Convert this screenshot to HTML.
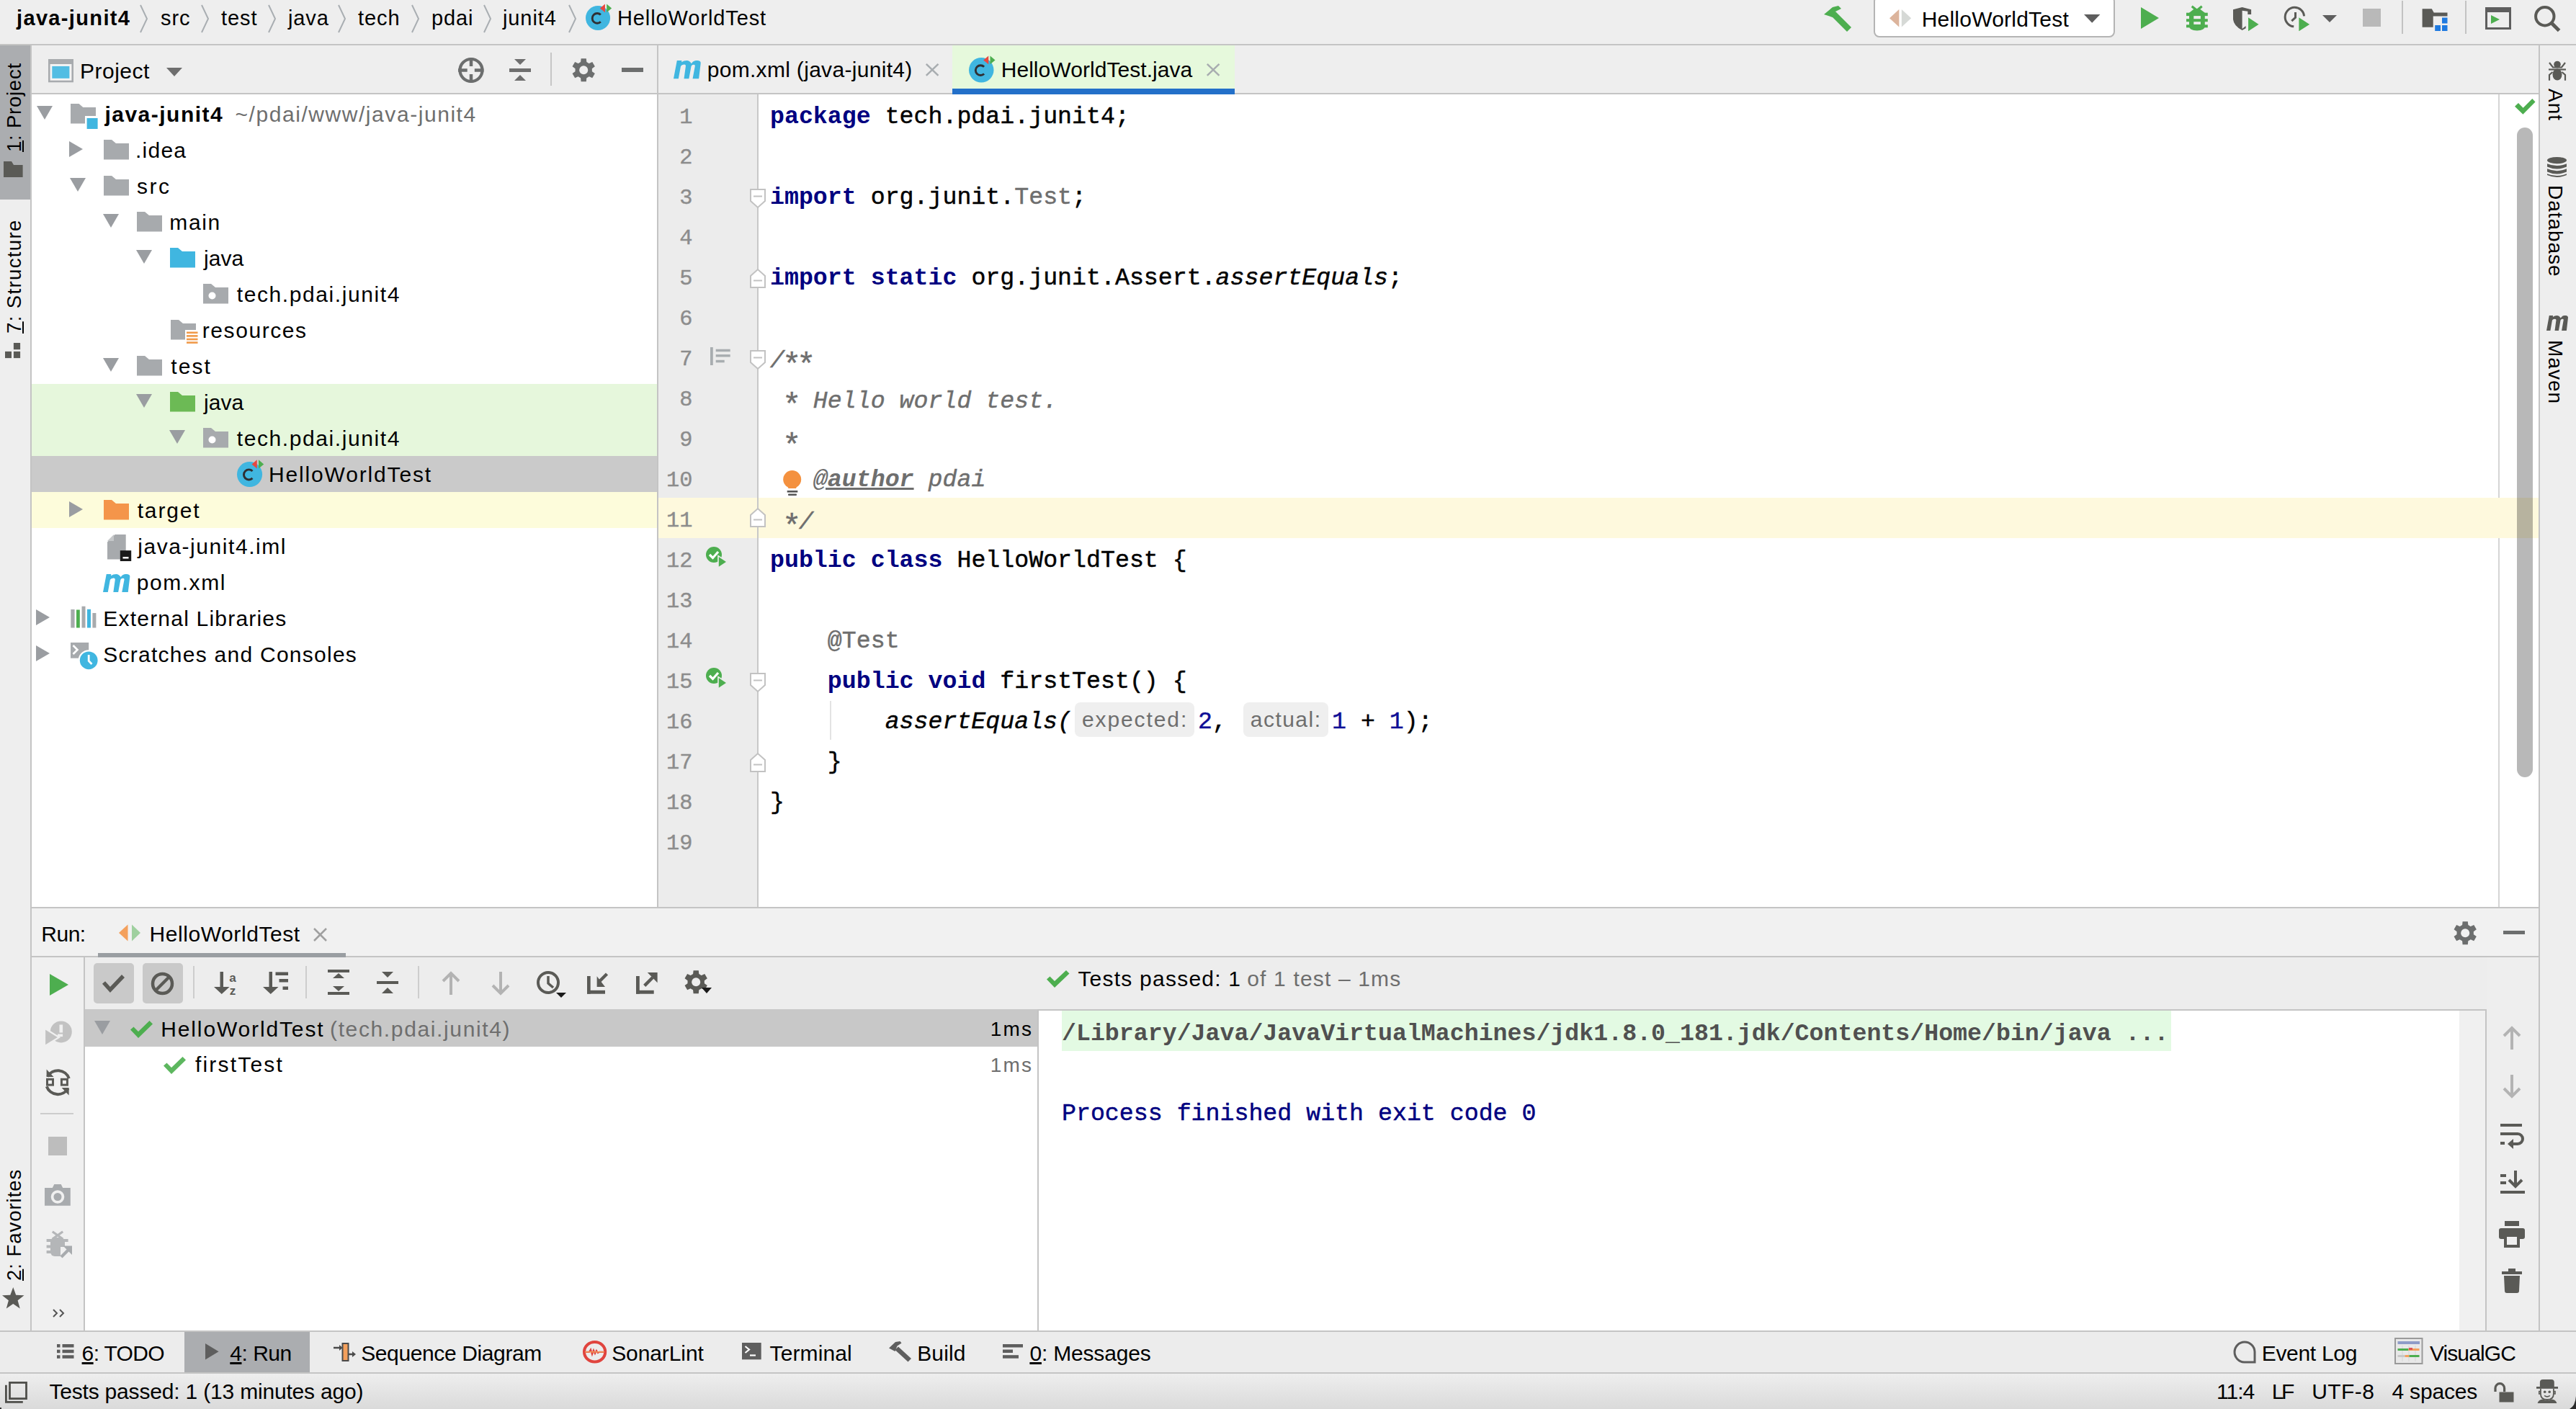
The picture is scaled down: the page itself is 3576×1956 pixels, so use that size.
<!DOCTYPE html>
<html><head><meta charset="utf-8">
<style>
*{box-sizing:border-box}
html,body{margin:0;padding:0}
body{width:3576px;height:1956px;overflow:hidden;position:relative;background:#eeeeee;font-family:"Liberation Sans",sans-serif;color:#000}
.a{position:absolute}
.t{position:absolute;white-space:pre;font-size:30px;line-height:50px}
.m{font-family:"Liberation Mono",monospace}
.hl{position:absolute;background:#c4c4c4}
.gr{color:#6e6e6e}
svg{position:absolute;overflow:visible}
</style></head><body>

<!-- ============ TOP BAR ============ -->
<div class="a" style="left:0;top:0;width:3576px;height:61px;background:#eeeeee"></div>
<div class="hl" style="left:0;top:61px;width:3576px;height:2px"></div>

<!-- ============ LEFT STRIP ============ -->
<div class="a" style="left:0;top:63px;width:42px;height:1784px;background:#eeeeee"></div>
<div class="a" style="left:0;top:63px;width:42px;height:214px;background:#abadb0"></div>
<div class="hl" style="left:42px;top:63px;width:2px;height:1784px"></div>

<!-- ============ PROJECT PANEL ============ -->
<div class="a" style="left:44px;top:63px;width:868px;height:66px;background:#eeeeee"></div>
<div class="hl" style="left:44px;top:129px;width:868px;height:2px"></div>
<div class="a" style="left:44px;top:131px;width:868px;height:1128px;background:#fff"></div>
<div class="a" style="left:44px;top:533px;width:868px;height:100px;background:#e6f7dc"></div>
<div class="a" style="left:44px;top:633px;width:868px;height:50px;background:#cacaca"></div>
<div class="a" style="left:44px;top:683px;width:868px;height:50px;background:#fdfcdb"></div>
<div class="hl" style="left:912px;top:63px;width:2px;height:1196px"></div>

<!-- ============ EDITOR ============ -->
<div class="a" style="left:914px;top:63px;width:2610px;height:66px;background:#eeeeee"></div>
<div class="a" style="left:1321.6px;top:63px;width:392px;height:66px;background:#e6f9dc"></div>
<div class="hl" style="left:914px;top:129px;width:2610px;height:2px"></div>
<div class="a" style="left:1321.6px;top:123px;width:392px;height:8px;background:#2370c9"></div>
<div class="a" style="left:914px;top:131px;width:137px;height:1128px;background:#ececec"></div>
<div class="a" style="left:1053px;top:131px;width:2471px;height:1128px;background:#fff"></div>
<div class="a" style="left:1051px;top:131px;width:2px;height:1128px;background:#c8c8c8"></div>
<div class="a" style="left:3468px;top:131px;width:2px;height:1128px;background:#d5d5d5"></div>
<div class="a" style="left:1053px;top:691px;width:2471px;height:56px;background:#fef9dd"></div>
<div class="a" style="left:914px;top:691px;width:137px;height:56px;background:#fef9dd"></div>
<div class="a" style="left:3494px;top:177px;width:22px;height:902px;background:rgba(0,0,0,0.28);border-radius:11px"></div>
<div class="hl" style="left:914px;top:1259px;width:2610px;height:2px"></div>

<!-- ============ RIGHT STRIP ============ -->
<div class="a" style="left:3526px;top:63px;width:50px;height:1784px;background:#eeeeee"></div>
<div class="hl" style="left:3524px;top:63px;width:2px;height:1784px"></div>

<!-- ============ RUN PANEL ============ -->
<div class="hl" style="left:44px;top:1259px;width:870px;height:2px"></div>
<div class="a" style="left:44px;top:1261px;width:3480px;height:66px;background:#f1f1f1"></div>
<div class="hl" style="left:44px;top:1327px;width:3480px;height:2px"></div>
<div class="a" style="left:136.2px;top:1323.2px;width:344px;height:5.8px;background:#9a9ea2"></div>
<div class="a" style="left:44px;top:1329px;width:72px;height:518px;background:#f0f0f0"></div>
<div class="hl" style="left:116px;top:1329px;width:2px;height:518px"></div>
<div class="a" style="left:118px;top:1329px;width:3406px;height:72px;background:#ededed"></div>
<div class="hl" style="left:118px;top:1401px;width:3334px;height:2px"></div>
<div class="a" style="left:118px;top:1403px;width:1322px;height:444px;background:#fff"></div>
<div class="a" style="left:118px;top:1401px;width:1322px;height:52px;background:#c8c8c8"></div>
<div class="hl" style="left:1440px;top:1403px;width:2px;height:444px"></div>
<div class="a" style="left:1442px;top:1403px;width:1972px;height:444px;background:#fff"></div>
<div class="a" style="left:1474px;top:1403px;width:1540px;height:56px;background:#e3fae3"></div>
<div class="a" style="left:3414px;top:1403px;width:36px;height:444px;background:#f0f0f0"></div>
<div class="hl" style="left:3450px;top:1401px;width:2px;height:446px"></div>
<div class="a" style="left:3452px;top:1329px;width:72px;height:518px;background:#eeeeee"></div>
<div class="hl" style="left:0;top:1847px;width:3576px;height:2px"></div>

<!-- ============ BOTTOM TOOLBAR ============ -->
<div class="a" style="left:0;top:1849px;width:3576px;height:56px;background:#ececec"></div>
<div class="a" style="left:256.2px;top:1849px;width:173.5px;height:56px;background:#abadb0"></div>
<div class="hl" style="left:0;top:1905px;width:3576px;height:2px"></div>

<!-- ============ STATUS BAR ============ -->
<div class="a" style="left:0;top:1907px;width:3576px;height:49px;background:linear-gradient(#eeeeee,#dadada)"></div>
<div class="t" style="left:23px;top:5.45px;font-size:29px;line-height:41px;color:#000;font-family:'Liberation Sans',sans-serif;font-weight:bold;letter-spacing:1.35px;">java-junit4</div>
<div class="t" style="left:223px;top:5.45px;font-size:29px;line-height:41px;color:#000;font-family:'Liberation Sans',sans-serif;letter-spacing:0.9px;">src</div>
<div class="t" style="left:307px;top:5.45px;font-size:29px;line-height:41px;color:#000;font-family:'Liberation Sans',sans-serif;letter-spacing:0.9px;">test</div>
<div class="t" style="left:400px;top:5.45px;font-size:29px;line-height:41px;color:#000;font-family:'Liberation Sans',sans-serif;letter-spacing:0.9px;">java</div>
<div class="t" style="left:497px;top:5.45px;font-size:29px;line-height:41px;color:#000;font-family:'Liberation Sans',sans-serif;letter-spacing:0.9px;">tech</div>
<div class="t" style="left:599px;top:5.45px;font-size:29px;line-height:41px;color:#000;font-family:'Liberation Sans',sans-serif;letter-spacing:0.9px;">pdai</div>
<div class="t" style="left:698px;top:5.45px;font-size:29px;line-height:41px;color:#000;font-family:'Liberation Sans',sans-serif;letter-spacing:0.9px;">junit4</div>
<div class="t" style="left:857px;top:5.45px;font-size:29px;line-height:41px;color:#000;font-family:'Liberation Sans',sans-serif;letter-spacing:0.9px;">HelloWorldTest</div>
<svg style="left:194px;top:7px;" width="12" height="38" viewBox="0 0 12 38"><polyline points="1,0 10,19 1,38" fill="none" stroke="#a9aeb2" stroke-width="2"/></svg>
<svg style="left:279px;top:7px;" width="12" height="38" viewBox="0 0 12 38"><polyline points="1,0 10,19 1,38" fill="none" stroke="#a9aeb2" stroke-width="2"/></svg>
<svg style="left:372px;top:7px;" width="12" height="38" viewBox="0 0 12 38"><polyline points="1,0 10,19 1,38" fill="none" stroke="#a9aeb2" stroke-width="2"/></svg>
<svg style="left:469px;top:7px;" width="12" height="38" viewBox="0 0 12 38"><polyline points="1,0 10,19 1,38" fill="none" stroke="#a9aeb2" stroke-width="2"/></svg>
<svg style="left:571px;top:7px;" width="12" height="38" viewBox="0 0 12 38"><polyline points="1,0 10,19 1,38" fill="none" stroke="#a9aeb2" stroke-width="2"/></svg>
<svg style="left:671px;top:7px;" width="12" height="38" viewBox="0 0 12 38"><polyline points="1,0 10,19 1,38" fill="none" stroke="#a9aeb2" stroke-width="2"/></svg>
<svg style="left:789px;top:7px;" width="12" height="38" viewBox="0 0 12 38"><polyline points="1,0 10,19 1,38" fill="none" stroke="#a9aeb2" stroke-width="2"/></svg>
<svg style="left:812.6px;top:4.5px;" width="36.83" height="37.1" viewBox="0 0 36.83 37.1"><circle cx="17.05" cy="20.05" r="17.05" fill="#40b6e0"/><path d="M20.85,15.57 A6.82,6.82 0 1 0 20.85,25.21" fill="none" stroke="#2f2f33" stroke-width="2.90"/><polygon points="26.94,0.44 19.95,6.41 26.94,12.21" fill="#e8473f"/><polygon points="29.16,0.44 36.15,6.41 29.16,12.21" fill="#4dae4f"/></svg>
<svg style="left:2530px;top:6px;" width="42" height="38" viewBox="0 0 42 38"><g fill="#4dae4f"><polygon points="2,14 14,4 22,2 26,6 18,10 14,18"/><polygon points="12,16 18,10 40,32 34,38"/></g></svg>
<div class="a" style="left:2600.5px;top:-6px;width:335.4px;height:58.4px;background:#fff;border:2.2px solid #b4b4b4;border-radius:8px;"></div>
<svg style="left:2622.8px;top:13.3px;" width="31" height="25" viewBox="0 0 31 25"><polygon points="13.3,0 0,12.2 13.3,24.4" fill="#dcb49c"/><polygon points="16.8,0 30.1,12.2 16.8,24.4" fill="#d6d9d6"/></svg>
<div class="t" style="left:2667.7px;top:5.61px;font-size:30px;line-height:42px;color:#000;font-family:'Liberation Sans',sans-serif;letter-spacing:0.223px;">HelloWorldTest</div>
<svg style="left:2892.5px;top:20.3px;" width="22.4" height="11.8" viewBox="0 0 22.4 11.8"><polygon points="0,0 22.4,0 11.2,11.8" fill="#5e5e5e"/></svg>
<svg style="left:2972px;top:10px;" width="25" height="30" viewBox="0 0 25 30"><polygon points="0,0 25,15 0,30" fill="#4dae4f"/></svg>
<svg style="left:3035px;top:8px;" width="30" height="36" viewBox="0 0 30 36"><g stroke="#4dae4f" stroke-width="3.2"><line x1="7.7" y1="0.8" x2="15.4" y2="7"/><line x1="21.7" y1="0.8" x2="14" y2="7"/></g><g fill="#4dae4f"><path d="M4,9.7 L11,4.3 L18.6,4.3 L25.8,9.7 L25.8,28 Q25.8,34.4 14.9,34.4 Q4,34.4 4,28 Z"/><rect x="0" y="9.7" width="29.8" height="4.4"/><rect x="0" y="18.2" width="29.8" height="4"/><rect x="0" y="26.3" width="29.8" height="4"/></g><rect x="10.3" y="14.1" width="9.6" height="4.1" fill="#eeeeee"/><rect x="10.3" y="22.2" width="9.6" height="3.7" fill="#eeeeee"/></svg>
<svg style="left:3100.2px;top:10px;" width="38" height="36" viewBox="0 0 38 36"><path d="M0,3.3 L12.6,0 L25.1,3.3 L25.1,9.9 L20.3,9.9 L20.3,5.8 L12.6,4.7 L12.6,30 L17.6,26 L17.6,29.2 L12.6,32 Q1,26 0,17 Z" fill="#5a5a56"/><polygon points="20.3,12.9 36.9,23.8 20.3,34.6" fill="#4dae4f" stroke="#eeeeee" stroke-width="1.5"/></svg>
<svg style="left:3170px;top:8px;" width="40" height="38" viewBox="0 0 40 38"><path d="M14.25,28.80 A13.25,13.25 0 1 1 28.60,14.45" fill="none" stroke="#5a5a56" stroke-width="3"/><polyline points="16.5,9 16.5,16.3 11.3,21.1" fill="none" stroke="#5a5a56" stroke-width="3"/><polygon points="20.6,14.9 37.5,25.8 20.6,36.6" fill="#4dae4f" stroke="#eeeeee" stroke-width="1.5"/></svg>
<svg style="left:3224px;top:21px;" width="20" height="10" viewBox="0 0 20 10"><polygon points="0,0 20,0 10,10" fill="#5e5e5e"/></svg>
<div class="a" style="left:3279.5px;top:12.3px;width:25px;height:25px;background:#b9b9b9;"></div>
<div class="a" style="left:3334px;top:1px;width:2px;height:46px;background:#c3c3c3;"></div>
<svg style="left:3362px;top:12px;" width="36" height="32" viewBox="0 0 36 32"><path d="M0.6,0.3 L13.8,0.3 L16.7,5.4 L35.5,5.4 L35.5,10.6 L15.7,10.6 L15.7,25.7 L0.6,25.7 Z" fill="#5a5a56"/><rect x="28" y="12.5" width="7.5" height="8" fill="#1f7ae0"/><rect x="18.2" y="23" width="7.8" height="8" fill="#1f7ae0"/><rect x="28" y="23" width="7.5" height="8" fill="#1f7ae0"/></svg>
<div class="a" style="left:3422px;top:1px;width:2px;height:46px;background:#c3c3c3;"></div>
<svg style="left:3450px;top:10px;" width="36" height="31" viewBox="0 0 36 31"><rect x="1.5" y="1.5" width="33" height="28" fill="none" stroke="#5e5e5e" stroke-width="3"/><rect x="1" y="1" width="34" height="6" fill="#5e5e5e"/><polygon points="8,11 20,17 8,23" fill="#4dae4f"/></svg>
<svg style="left:3518px;top:7.5px;" width="38" height="38" viewBox="0 0 38 38"><circle cx="14.8" cy="14.7" r="12.7" fill="none" stroke="#5a5a56" stroke-width="4"/><line x1="23.5" y1="23.5" x2="34.6" y2="34.6" stroke="#5a5a56" stroke-width="5"/></svg>
<div class="t" style="left:1.47px;top:211.20px;font-size:27.5px;line-height:38px;color:#000;letter-spacing:0.767px;transform-origin:0 0;transform:rotate(-90deg)"><u>1</u>: Project</div>
<svg style="left:4.7px;top:224px;" width="27" height="22" viewBox="0 0 27 22"><path d="M0,0 L11,0 L14,5 L26.6,5 L26.6,22 L0,22 Z" fill="#5a5a56"/></svg>
<div class="t" style="left:1.47px;top:462.60px;font-size:27.5px;line-height:38px;color:#000;letter-spacing:1.373px;transform-origin:0 0;transform:rotate(-90deg)"><u>7</u>: Structure</div>
<svg style="left:7.2px;top:476px;" width="22" height="22" viewBox="0 0 22 22"><rect x="11.9" y="0" width="9.2" height="9.2" fill="#5a5a56"/><rect x="0" y="11.9" width="9" height="9.2" fill="#5a5a56"/><rect x="11.9" y="11.9" width="9.2" height="9.2" fill="#5a5a56"/></svg>
<div class="t" style="left:1.47px;top:1778.40px;font-size:27.5px;line-height:38px;color:#000;letter-spacing:0.964px;transform-origin:0 0;transform:rotate(-90deg)"><u>2</u>: Favorites</div>
<svg style="left:2.7px;top:1787px;" width="30.5" height="30" viewBox="0 0 30.5 30"><polygon points="15.25,0 19.2,10.8 30.5,11.2 21.6,18.3 24.7,29.5 15.25,23.1 5.8,29.5 8.9,18.3 0,11.2 11.3,10.8" fill="#5a5a56"/></svg>
<svg style="left:66.7px;top:82.1px;" width="35" height="32.3" viewBox="0 0 35 32.3"><rect x="0" y="0" width="35" height="32.3" fill="#a8abae"/><rect x="2.6" y="7" width="29.8" height="22.7" fill="#f4f4f4"/><rect x="5.3" y="9.9" width="24.1" height="16.9" fill="#52bde3"/></svg>
<div class="t" style="left:111px;top:77.61px;font-size:30px;line-height:42px;color:#000;font-family:'Liberation Sans',sans-serif;letter-spacing:0.5px;">Project</div>
<svg style="left:231px;top:94px;" width="22" height="12" viewBox="0 0 22 12"><polygon points="0,0 22,0 11,12" fill="#6e6e6e"/></svg>
<svg style="left:636px;top:79.5px;" width="36" height="36" viewBox="0 0 36 36"><circle cx="18" cy="17.5" r="15.5" fill="none" stroke="#6c6e6e" stroke-width="4.2"/><rect x="15.75" y="0" width="4.5" height="12" fill="#6c6e6e"/><rect x="15.75" y="23" width="4.5" height="12" fill="#6c6e6e"/><rect x="0" y="15.25" width="12.7" height="4.5" fill="#6c6e6e"/><rect x="22.8" y="15.25" width="12.7" height="4.5" fill="#6c6e6e"/></svg>
<svg style="left:707px;top:82px;" width="30" height="30" viewBox="0 0 30 30"><polygon points="7,0 23,0 15,8" fill="#6e6e6e"/><rect x="0" y="13" width="30" height="5" fill="#6e6e6e"/><polygon points="7,30 23,30 15,22" fill="#6e6e6e"/></svg>
<div class="a" style="left:764px;top:73px;width:2px;height:46px;background:#c6c6c6;"></div>
<svg style="left:793.8px;top:80.7px;" width="32.4" height="32.4" viewBox="0 0 32.4 32.4"><g fill="#6c6e6e"><circle cx="16.2" cy="16.2" r="11.7"/><path d="M12.6,0.2 L19.8,0.2 L20.6,8 L11.8,8 Z" transform="rotate(0 16.2 16.2)"/><path d="M12.6,0.2 L19.8,0.2 L20.6,8 L11.8,8 Z" transform="rotate(60 16.2 16.2)"/><path d="M12.6,0.2 L19.8,0.2 L20.6,8 L11.8,8 Z" transform="rotate(120 16.2 16.2)"/><path d="M12.6,0.2 L19.8,0.2 L20.6,8 L11.8,8 Z" transform="rotate(180 16.2 16.2)"/><path d="M12.6,0.2 L19.8,0.2 L20.6,8 L11.8,8 Z" transform="rotate(240 16.2 16.2)"/><path d="M12.6,0.2 L19.8,0.2 L20.6,8 L11.8,8 Z" transform="rotate(300 16.2 16.2)"/></g><circle cx="16.2" cy="16.2" r="6" fill="#eeeeee"/></svg>
<div class="a" style="left:863px;top:94.2px;width:30px;height:5.6px;background:#6c6e6e;"></div>
<svg style="left:50.6px;top:147px;" width="22" height="19" viewBox="0 0 22 19"><polygon points="0,0 22,0 11,19" fill="#9a9da1"/></svg>
<svg style="left:98px;top:144px;" width="39" height="35" viewBox="0 0 39 35"><path d="M0,0 L11.6,0 L17.3,5 L35,5 L35,17 L20,17 L20,27.5 L0,27.5 Z" fill="#a7aaad"/><rect x="22.6" y="20" width="15" height="15" fill="#40b6e0"/></svg>
<div class="t" style="left:145.4px;top:137.60px;font-size:30px;line-height:42px;color:#000;font-family:'Liberation Sans',sans-serif;font-weight:bold;letter-spacing:1.5px;">java-junit4</div>
<div class="t" style="left:326.5px;top:137.60px;font-size:30px;line-height:42px;color:#6e6e6e;font-family:'Liberation Sans',sans-serif;letter-spacing:1.557px;">~/pdai/www/java-junit4</div>
<svg style="left:96px;top:195.7px;" width="19" height="22" viewBox="0 0 19 22"><polygon points="0,0 19,11 0,22" fill="#9a9da1"/></svg>
<svg style="left:144.3px;top:194px;" width="35" height="28" viewBox="0 0 35 28"><path d="M0,0 L11,0 L17,5 L35,5 L35,27.5 L0,27.5 Z" fill="#a7aaad"/></svg>
<div class="t" style="left:187.9px;top:187.60px;font-size:30px;line-height:42px;color:#000;font-family:'Liberation Sans',sans-serif;letter-spacing:1.275px;">.idea</div>
<svg style="left:96.6px;top:247px;" width="22" height="19" viewBox="0 0 22 19"><polygon points="0,0 22,0 11,19" fill="#9a9da1"/></svg>
<svg style="left:144.3px;top:244px;" width="35" height="28" viewBox="0 0 35 28"><path d="M0,0 L11,0 L17,5 L35,5 L35,27.5 L0,27.5 Z" fill="#a7aaad"/></svg>
<div class="t" style="left:189.9px;top:237.60px;font-size:30px;line-height:42px;color:#000;font-family:'Liberation Sans',sans-serif;letter-spacing:2.5px;">src</div>
<svg style="left:142.6px;top:297px;" width="22" height="19" viewBox="0 0 22 19"><polygon points="0,0 22,0 11,19" fill="#9a9da1"/></svg>
<svg style="left:190.3px;top:294px;" width="35" height="28" viewBox="0 0 35 28"><path d="M0,0 L11,0 L17,5 L35,5 L35,27.5 L0,27.5 Z" fill="#a7aaad"/></svg>
<div class="t" style="left:235.3px;top:287.61px;font-size:30px;line-height:42px;color:#000;font-family:'Liberation Sans',sans-serif;letter-spacing:1.633px;">main</div>
<svg style="left:188.6px;top:347px;" width="22" height="19" viewBox="0 0 22 19"><polygon points="0,0 22,0 11,19" fill="#9a9da1"/></svg>
<svg style="left:236.3px;top:344px;" width="35" height="28" viewBox="0 0 35 28"><path d="M0,0 L11,0 L17,5 L35,5 L35,27.5 L0,27.5 Z" fill="#40b6e0"/></svg>
<div class="t" style="left:283px;top:337.61px;font-size:30px;line-height:42px;color:#000;font-family:'Liberation Sans',sans-serif;letter-spacing:0.067px;">java</div>
<svg style="left:282.2px;top:394px;" width="35" height="28" viewBox="0 0 35 28"><path d="M0,0 L11,0 L17,5 L35,5 L35,27.5 L0,27.5 Z" fill="#a7aaad"/><circle cx="12.5" cy="16.5" r="5" fill="#fff"/></svg>
<div class="t" style="left:328.8px;top:387.61px;font-size:30px;line-height:42px;color:#000;font-family:'Liberation Sans',sans-serif;letter-spacing:1.587px;">tech.pdai.junit4</div>
<svg style="left:236.5px;top:444px;" width="38" height="36" viewBox="0 0 38 36"><path d="M0,0 L11,0 L17,5 L35,5 L35,27.5 L0,27.5 Z" fill="#a7aaad"/><rect x="20" y="14" width="18" height="22" fill="#fff"/><rect x="22" y="16.5" width="15.5" height="2.6" fill="#f09a4a"/><rect x="22" y="21.1" width="15.5" height="2.6" fill="#f09a4a"/><rect x="22" y="25.7" width="15.5" height="2.6" fill="#f09a4a"/><rect x="22" y="30.3" width="15.5" height="2.6" fill="#f09a4a"/></svg>
<div class="t" style="left:280.8px;top:437.61px;font-size:30px;line-height:42px;color:#000;font-family:'Liberation Sans',sans-serif;letter-spacing:1.575px;">resources</div>
<svg style="left:142.6px;top:497px;" width="22" height="19" viewBox="0 0 22 19"><polygon points="0,0 22,0 11,19" fill="#9a9da1"/></svg>
<svg style="left:190.3px;top:494px;" width="35" height="28" viewBox="0 0 35 28"><path d="M0,0 L11,0 L17,5 L35,5 L35,27.5 L0,27.5 Z" fill="#a7aaad"/></svg>
<div class="t" style="left:237.3px;top:487.61px;font-size:30px;line-height:42px;color:#000;font-family:'Liberation Sans',sans-serif;letter-spacing:2.1px;">test</div>
<svg style="left:188.6px;top:547px;" width="22" height="19" viewBox="0 0 22 19"><polygon points="0,0 22,0 11,19" fill="#9a9da1"/></svg>
<svg style="left:236.3px;top:544px;" width="35" height="28" viewBox="0 0 35 28"><path d="M0,0 L11,0 L17,5 L35,5 L35,27.5 L0,27.5 Z" fill="#6cba55"/></svg>
<div class="t" style="left:283px;top:537.61px;font-size:30px;line-height:42px;color:#000;font-family:'Liberation Sans',sans-serif;letter-spacing:0.067px;">java</div>
<svg style="left:234.6px;top:597px;" width="22" height="19" viewBox="0 0 22 19"><polygon points="0,0 22,0 11,19" fill="#9a9da1"/></svg>
<svg style="left:282.2px;top:594px;" width="35" height="28" viewBox="0 0 35 28"><path d="M0,0 L11,0 L17,5 L35,5 L35,27.5 L0,27.5 Z" fill="#a7aaad"/><circle cx="12.5" cy="16.5" r="5" fill="#fff"/></svg>
<div class="t" style="left:328.8px;top:587.61px;font-size:30px;line-height:42px;color:#000;font-family:'Liberation Sans',sans-serif;letter-spacing:1.587px;">tech.pdai.junit4</div>
<svg style="left:328.5px;top:638px;" width="37.91" height="38.1" viewBox="0 0 37.91 38.1"><circle cx="17.55" cy="20.55" r="17.55" fill="#40b6e0"/><path d="M21.46,15.94 A7.02,7.02 0 1 0 21.46,25.86" fill="none" stroke="#2f2f33" stroke-width="2.98"/><polygon points="27.73,0.37 20.53,6.51 27.73,12.48" fill="#e8473f"/><polygon points="30.01,0.37 37.21,6.51 30.01,12.48" fill="#4dae4f"/></svg>
<div class="t" style="left:372.9px;top:637.61px;font-size:30px;line-height:42px;color:#000;font-family:'Liberation Sans',sans-serif;letter-spacing:1.854px;">HelloWorldTest</div>
<svg style="left:96px;top:695.7px;" width="19" height="22" viewBox="0 0 19 22"><polygon points="0,0 19,11 0,22" fill="#9a9da1"/></svg>
<svg style="left:144.3px;top:694px;" width="35" height="28" viewBox="0 0 35 28"><path d="M0,0 L11,0 L17,5 L35,5 L35,27.5 L0,27.5 Z" fill="#f4954a"/></svg>
<div class="t" style="left:190.7px;top:687.61px;font-size:30px;line-height:42px;color:#000;font-family:'Liberation Sans',sans-serif;letter-spacing:1.84px;">target</div>
<svg style="left:149px;top:741.8px;" width="34" height="37" viewBox="0 0 34 37"><path d="M10.6,0 L25.7,0 L25.7,23 L18,23 L18,34.5 L0,34.5 L0,10.6 Z" fill="#a7aaad"/><polygon points="0,9 9,0 9,9" fill="#c5c7c9"/><rect x="17.8" y="22.2" width="15.4" height="14.8" fill="#1a1a1a"/><rect x="21.5" y="31" width="8" height="2.5" fill="#fff"/></svg>
<div class="t" style="left:191.3px;top:737.61px;font-size:30px;line-height:42px;color:#000;font-family:'Liberation Sans',sans-serif;letter-spacing:1.557px;">java-junit4.iml</div>
<svg style="left:143.2px;top:796.5px;" width="37.9" height="24.9" viewBox="0 0 37.9 24.9"><g transform="scale(1.011,1.025)"><path d="M0,24.3 L4.7,0 L11.2,0 L10.9,2.2 Q14,0 18.2,0 Q21.5,0 24.4,4 Q26.5,0.5 30.5,0 L33,0 Q37.5,0.5 36.9,4 L34.4,24.3 L26,24.3 L29.2,7.5 Q29.5,5.5 27.4,5.6 Q25,5.7 24.1,7.5 L20.9,24.3 L14.2,24.3 L16.6,7.5 Q16.8,5.3 14.4,5.4 Q11,5.6 9.8,7.6 L6.7,24.3 Z" fill="#40b6e0"/></g></svg>
<div class="t" style="left:189.8px;top:787.61px;font-size:30px;line-height:42px;color:#000;font-family:'Liberation Sans',sans-serif;letter-spacing:1.533px;">pom.xml</div>
<svg style="left:50px;top:845.7px;" width="19" height="22" viewBox="0 0 19 22"><polygon points="0,0 19,11 0,22" fill="#9a9da1"/></svg>
<svg style="left:98px;top:841px;" width="36" height="32" viewBox="0 0 36 32"><rect x="0.3" y="5" width="5.3" height="25.5" fill="#a7aaad"/><rect x="8" y="5.5" width="4.8" height="25" fill="#4dae4f"/><rect x="15.5" y="0.7" width="5" height="29.8" fill="#a7aaad"/><rect x="23" y="4.8" width="5" height="25.7" fill="#40b6e0"/><rect x="30.4" y="10" width="5" height="20.5" fill="#a7aaad"/></svg>
<div class="t" style="left:143.3px;top:837.61px;font-size:30px;line-height:42px;color:#000;font-family:'Liberation Sans',sans-serif;letter-spacing:1.206px;">External Libraries</div>
<svg style="left:50px;top:895.7px;" width="19" height="22" viewBox="0 0 19 22"><polygon points="0,0 19,11 0,22" fill="#9a9da1"/></svg>
<svg style="left:98.3px;top:891.5px;" width="40" height="40" viewBox="0 0 40 40"><rect x="0" y="0" width="25.2" height="21.7" fill="#a7aaad"/><polyline points="3.5,4 9.5,10 3.5,16" fill="none" stroke="#fff" stroke-width="2.6"/><circle cx="25.2" cy="24.8" r="14.6" fill="#fff"/><circle cx="25.2" cy="24.8" r="12.4" fill="#40b6e0"/><polyline points="25.2,17 25.2,25.5 29.5,30" fill="none" stroke="#fff" stroke-width="2.8"/></svg>
<div class="t" style="left:143.3px;top:887.61px;font-size:30px;line-height:42px;color:#000;font-family:'Liberation Sans',sans-serif;letter-spacing:1.257px;">Scratches and Consoles</div>
<svg style="left:934.8px;top:84.3px;" width="38.3" height="25.3" viewBox="0 0 38.3 25.3"><g transform="scale(1.021,1.041)"><path d="M0,24.3 L4.7,0 L11.2,0 L10.9,2.2 Q14,0 18.2,0 Q21.5,0 24.4,4 Q26.5,0.5 30.5,0 L33,0 Q37.5,0.5 36.9,4 L34.4,24.3 L26,24.3 L29.2,7.5 Q29.5,5.5 27.4,5.6 Q25,5.7 24.1,7.5 L20.9,24.3 L14.2,24.3 L16.6,7.5 Q16.8,5.3 14.4,5.4 Q11,5.6 9.8,7.6 L6.7,24.3 Z" fill="#40b6e0"/></g></svg>
<div class="t" style="left:981.7px;top:75.91px;font-size:30px;line-height:42px;color:#000;font-family:'Liberation Sans',sans-serif;letter-spacing:0.31px;">pom.xml (java-junit4)</div>
<svg style="left:1284.9px;top:88.3px;" width="18.3" height="17.7" viewBox="0 0 18.3 17.7"><line x1="0.8" y1="0.8" x2="17.50" y2="16.90" stroke="#a8adb0" stroke-width="2.5"/><line x1="17.50" y1="0.8" x2="0.8" y2="16.90" stroke="#a8adb0" stroke-width="2.5"/></svg>
<svg style="left:1344.8px;top:76.6px;" width="37.26" height="37.5" viewBox="0 0 37.26 37.5"><circle cx="17.25" cy="20.25" r="17.25" fill="#40b6e0"/><path d="M21.09,15.72 A6.90,6.90 0 1 0 21.09,25.47" fill="none" stroke="#2f2f33" stroke-width="2.93"/><polygon points="27.26,0.41 20.18,6.45 27.26,12.32" fill="#e8473f"/><polygon points="29.50,0.41 36.57,6.45 29.50,12.32" fill="#4dae4f"/></svg>
<div class="t" style="left:1389.7px;top:75.91px;font-size:30px;line-height:42px;color:#000;font-family:'Liberation Sans',sans-serif;letter-spacing:0.056px;">HelloWorldTest.java</div>
<svg style="left:1674.8px;top:88.3px;" width="18.3" height="17.7" viewBox="0 0 18.3 17.7"><line x1="0.8" y1="0.8" x2="17.50" y2="16.90" stroke="#a8adb0" stroke-width="2.5"/><line x1="17.50" y1="0.8" x2="0.8" y2="16.90" stroke="#a8adb0" stroke-width="2.5"/></svg>
<div class="t" style="left:943.3px;top:141.93px;font-size:30.3px;line-height:42px;color:#8c8c8c;font-family:'Liberation Mono',monospace;letter-spacing:0px;-webkit-text-stroke:0.4px;">1</div>
<div class="t" style="left:943.3px;top:197.93px;font-size:30.3px;line-height:42px;color:#8c8c8c;font-family:'Liberation Mono',monospace;letter-spacing:0px;-webkit-text-stroke:0.4px;">2</div>
<div class="t" style="left:943.3px;top:253.93px;font-size:30.3px;line-height:42px;color:#8c8c8c;font-family:'Liberation Mono',monospace;letter-spacing:0px;-webkit-text-stroke:0.4px;">3</div>
<div class="t" style="left:943.3px;top:309.93px;font-size:30.3px;line-height:42px;color:#8c8c8c;font-family:'Liberation Mono',monospace;letter-spacing:0px;-webkit-text-stroke:0.4px;">4</div>
<div class="t" style="left:943.3px;top:365.93px;font-size:30.3px;line-height:42px;color:#8c8c8c;font-family:'Liberation Mono',monospace;letter-spacing:0px;-webkit-text-stroke:0.4px;">5</div>
<div class="t" style="left:943.3px;top:421.93px;font-size:30.3px;line-height:42px;color:#8c8c8c;font-family:'Liberation Mono',monospace;letter-spacing:0px;-webkit-text-stroke:0.4px;">6</div>
<div class="t" style="left:943.3px;top:477.93px;font-size:30.3px;line-height:42px;color:#8c8c8c;font-family:'Liberation Mono',monospace;letter-spacing:0px;-webkit-text-stroke:0.4px;">7</div>
<div class="t" style="left:943.3px;top:533.93px;font-size:30.3px;line-height:42px;color:#8c8c8c;font-family:'Liberation Mono',monospace;letter-spacing:0px;-webkit-text-stroke:0.4px;">8</div>
<div class="t" style="left:943.3px;top:589.93px;font-size:30.3px;line-height:42px;color:#8c8c8c;font-family:'Liberation Mono',monospace;letter-spacing:0px;-webkit-text-stroke:0.4px;">9</div>
<div class="t" style="left:925.1px;top:645.93px;font-size:30.3px;line-height:42px;color:#8c8c8c;font-family:'Liberation Mono',monospace;letter-spacing:0px;-webkit-text-stroke:0.4px;">10</div>
<div class="t" style="left:925.1px;top:701.93px;font-size:30.3px;line-height:42px;color:#8c8c8c;font-family:'Liberation Mono',monospace;letter-spacing:0px;-webkit-text-stroke:0.4px;">11</div>
<div class="t" style="left:925.1px;top:757.93px;font-size:30.3px;line-height:42px;color:#8c8c8c;font-family:'Liberation Mono',monospace;letter-spacing:0px;-webkit-text-stroke:0.4px;">12</div>
<div class="t" style="left:925.1px;top:813.93px;font-size:30.3px;line-height:42px;color:#8c8c8c;font-family:'Liberation Mono',monospace;letter-spacing:0px;-webkit-text-stroke:0.4px;">13</div>
<div class="t" style="left:925.1px;top:869.93px;font-size:30.3px;line-height:42px;color:#8c8c8c;font-family:'Liberation Mono',monospace;letter-spacing:0px;-webkit-text-stroke:0.4px;">14</div>
<div class="t" style="left:925.1px;top:925.93px;font-size:30.3px;line-height:42px;color:#8c8c8c;font-family:'Liberation Mono',monospace;letter-spacing:0px;-webkit-text-stroke:0.4px;">15</div>
<div class="t" style="left:925.1px;top:981.93px;font-size:30.3px;line-height:42px;color:#8c8c8c;font-family:'Liberation Mono',monospace;letter-spacing:0px;-webkit-text-stroke:0.4px;">16</div>
<div class="t" style="left:925.1px;top:1037.93px;font-size:30.3px;line-height:42px;color:#8c8c8c;font-family:'Liberation Mono',monospace;letter-spacing:0px;-webkit-text-stroke:0.4px;">17</div>
<div class="t" style="left:925.1px;top:1093.93px;font-size:30.3px;line-height:42px;color:#8c8c8c;font-family:'Liberation Mono',monospace;letter-spacing:0px;-webkit-text-stroke:0.4px;">18</div>
<div class="t" style="left:925.1px;top:1149.93px;font-size:30.3px;line-height:42px;color:#8c8c8c;font-family:'Liberation Mono',monospace;letter-spacing:0px;-webkit-text-stroke:0.4px;">19</div>
<svg style="left:1041px;top:262px;" width="22" height="27" viewBox="0 0 22 27"><path d="M1,1 L21,1 L21,17 L11,26 L1,17 Z" fill="#fff" stroke="#c2c2c2" stroke-width="2"/><line x1="5" y1="10.5" x2="17" y2="10.5" stroke="#c2c2c2" stroke-width="2"/></svg>
<svg style="left:1041px;top:373px;" width="22" height="27" viewBox="0 0 22 27"><path d="M1,26 L21,26 L21,10 L11,1 L1,10 Z" fill="#fff" stroke="#c2c2c2" stroke-width="2"/><line x1="5" y1="16.5" x2="17" y2="16.5" stroke="#c2c2c2" stroke-width="2"/></svg>
<svg style="left:1041px;top:486px;" width="22" height="27" viewBox="0 0 22 27"><path d="M1,1 L21,1 L21,17 L11,26 L1,17 Z" fill="#fff" stroke="#c2c2c2" stroke-width="2"/><line x1="5" y1="10.5" x2="17" y2="10.5" stroke="#c2c2c2" stroke-width="2"/></svg>
<svg style="left:1041px;top:705px;" width="22" height="27" viewBox="0 0 22 27"><path d="M1,26 L21,26 L21,10 L11,1 L1,10 Z" fill="#fff" stroke="#c2c2c2" stroke-width="2"/><line x1="5" y1="16.5" x2="17" y2="16.5" stroke="#c2c2c2" stroke-width="2"/></svg>
<svg style="left:1041px;top:934px;" width="22" height="27" viewBox="0 0 22 27"><path d="M1,1 L21,1 L21,17 L11,26 L1,17 Z" fill="#fff" stroke="#c2c2c2" stroke-width="2"/><line x1="5" y1="10.5" x2="17" y2="10.5" stroke="#c2c2c2" stroke-width="2"/></svg>
<svg style="left:1041px;top:1045px;" width="22" height="27" viewBox="0 0 22 27"><path d="M1,26 L21,26 L21,10 L11,1 L1,10 Z" fill="#fff" stroke="#c2c2c2" stroke-width="2"/><line x1="5" y1="16.5" x2="17" y2="16.5" stroke="#c2c2c2" stroke-width="2"/></svg>
<svg style="left:986px;top:481.5px;" width="28" height="25" viewBox="0 0 28 25"><rect x="0" y="0" width="3.8" height="25" fill="#a8adb0"/><rect x="7.7" y="2.7" width="20" height="3.5" fill="#a8adb0"/><rect x="7.7" y="10.1" width="20" height="3.4" fill="#a8adb0"/><rect x="7.7" y="17.8" width="12" height="3.5" fill="#a8adb0"/></svg>
<svg style="left:980px;top:759px;" width="34" height="32" viewBox="0 0 34 32"><circle cx="11" cy="11" r="11" fill="#4dae4f"/><polyline points="5,11 9.5,15.5 17,7" fill="none" stroke="#fff" stroke-width="3.2"/><polygon points="6,12 20,20 6,30" fill="#fff" transform="translate(-2,-2)" opacity="0"/><polygon points="17,12.7 29.5,21 17,29.2" fill="#4dae4f" stroke="#ececec" stroke-width="1.6"/></svg>
<svg style="left:980px;top:927px;" width="34" height="32" viewBox="0 0 34 32"><circle cx="11" cy="11" r="11" fill="#4dae4f"/><polyline points="5,11 9.5,15.5 17,7" fill="none" stroke="#fff" stroke-width="3.2"/><polygon points="6,12 20,20 6,30" fill="#fff" transform="translate(-2,-2)" opacity="0"/><polygon points="17,12.7 29.5,21 17,29.2" fill="#4dae4f" stroke="#ececec" stroke-width="1.6"/></svg>
<div class="t" style="left:1069px;top:138.64px;font-size:33.25px;line-height:47px;color:#000;font-family:'Liberation Mono',monospace;-webkit-text-stroke:0.45px;"><span style="color:#000080;font-weight:bold;-webkit-text-stroke:0;">package</span> tech.pdai.junit4;</div>
<div class="t" style="left:1069px;top:250.64px;font-size:33.25px;line-height:47px;color:#000;font-family:'Liberation Mono',monospace;-webkit-text-stroke:0.45px;"><span style="color:#000080;font-weight:bold;-webkit-text-stroke:0;">import</span> org.junit.<span style="color:#6e6e6e;">Test</span>;</div>
<div class="t" style="left:1069px;top:362.64px;font-size:33.25px;line-height:47px;color:#000;font-family:'Liberation Mono',monospace;-webkit-text-stroke:0.45px;"><span style="color:#000080;font-weight:bold;-webkit-text-stroke:0;">import</span> <span style="color:#000080;font-weight:bold;-webkit-text-stroke:0;">static</span> org.junit.Assert.<span style="font-style:italic;">assertEquals</span>;</div>
<div class="t" style="left:1069px;top:474.64px;font-size:33.25px;line-height:47px;color:#000;font-family:'Liberation Mono',monospace;-webkit-text-stroke:0.45px;"><span style="color:#6e6e6e;font-style:italic;">/<span style="display:inline-block;width:19.95px;text-align:center;font-size:44px;position:relative;top:10.5px;left:-3px;font-style:normal">*</span><span style="display:inline-block;width:19.95px;text-align:center;font-size:44px;position:relative;top:10.5px;left:-3px;font-style:normal">*</span></span></div>
<div class="t" style="left:1069px;top:530.64px;font-size:33.25px;line-height:47px;color:#000;font-family:'Liberation Mono',monospace;-webkit-text-stroke:0.45px;"><span style="color:#6e6e6e;font-style:italic;"> <span style="display:inline-block;width:19.95px;text-align:center;font-size:44px;position:relative;top:10.5px;left:-3px;font-style:normal">*</span> Hello world test.</span></div>
<div class="t" style="left:1069px;top:586.64px;font-size:33.25px;line-height:47px;color:#000;font-family:'Liberation Mono',monospace;-webkit-text-stroke:0.45px;"><span style="color:#6e6e6e;font-style:italic;"> <span style="display:inline-block;width:19.95px;text-align:center;font-size:44px;position:relative;top:10.5px;left:-3px;font-style:normal">*</span></span></div>
<div class="t" style="left:1069px;top:642.64px;font-size:33.25px;line-height:47px;color:#000;font-family:'Liberation Mono',monospace;-webkit-text-stroke:0.45px;"><span style="color:#6e6e6e;font-style:italic;">   </span><span style="color:#6e6e6e;font-weight:bold;-webkit-text-stroke:0;font-style:italic;text-decoration:underline;">@author</span><span style="color:#6e6e6e;font-style:italic;"> pdai</span></div>
<div class="t" style="left:1069px;top:698.64px;font-size:33.25px;line-height:47px;color:#000;font-family:'Liberation Mono',monospace;-webkit-text-stroke:0.45px;"><span style="color:#6e6e6e;font-style:italic;"> <span style="display:inline-block;width:19.95px;text-align:center;font-size:44px;position:relative;top:10.5px;left:-3px;font-style:normal">*</span>/</span></div>
<div class="t" style="left:1069px;top:754.64px;font-size:33.25px;line-height:47px;color:#000;font-family:'Liberation Mono',monospace;-webkit-text-stroke:0.45px;"><span style="color:#000080;font-weight:bold;-webkit-text-stroke:0;">public</span> <span style="color:#000080;font-weight:bold;-webkit-text-stroke:0;">class</span> HelloWorldTest {</div>
<div class="t" style="left:1069px;top:866.64px;font-size:33.25px;line-height:47px;color:#000;font-family:'Liberation Mono',monospace;-webkit-text-stroke:0.45px;"><span style="color:#6e6e6e;">    @Test</span></div>
<div class="t" style="left:1069px;top:922.64px;font-size:33.25px;line-height:47px;color:#000;font-family:'Liberation Mono',monospace;-webkit-text-stroke:0.45px;">    <span style="color:#000080;font-weight:bold;-webkit-text-stroke:0;">public</span> <span style="color:#000080;font-weight:bold;-webkit-text-stroke:0;">void</span> firstTest() {</div>
<div class="t" style="left:1069px;top:978.64px;font-size:33.25px;line-height:47px;color:#000;font-family:'Liberation Mono',monospace;-webkit-text-stroke:0.45px;"><span style="font-style:italic;">        assertEquals(</span></div>
<div class="t" style="left:1069px;top:1034.64px;font-size:33.25px;line-height:47px;color:#000;font-family:'Liberation Mono',monospace;-webkit-text-stroke:0.45px;">    }</div>
<div class="t" style="left:1069px;top:1090.64px;font-size:33.25px;line-height:47px;color:#000;font-family:'Liberation Mono',monospace;-webkit-text-stroke:0.45px;">}</div>
<div class="a" style="left:1492px;top:975px;width:166px;height:48px;background:#efefef;border-radius:8px;"></div>
<div class="t" style="left:1501.9px;top:977.61px;font-size:30px;line-height:42px;color:#6e6e6e;font-family:'Liberation Sans',sans-serif;letter-spacing:1.912px;">expected:</div>
<div class="t" style="left:1663px;top:978.64px;font-size:33.25px;line-height:47px;color:#000;font-family:'Liberation Mono',monospace;-webkit-text-stroke:0.45px;"><span style="color:#0f0f96">2</span>,</div>
<div class="a" style="left:1726px;top:975px;width:118px;height:48px;background:#efefef;border-radius:8px;"></div>
<div class="t" style="left:1735.8px;top:977.61px;font-size:30px;line-height:42px;color:#6e6e6e;font-family:'Liberation Sans',sans-serif;letter-spacing:1.467px;">actual:</div>
<div class="t" style="left:1849px;top:978.64px;font-size:33.25px;line-height:47px;color:#000;font-family:'Liberation Mono',monospace;-webkit-text-stroke:0.45px;"><span style="color:#0f0f96">1</span> + <span style="color:#0f0f96">1</span>);</div>
<div class="a" style="left:1152px;top:973px;width:2px;height:54px;background:#e3e3e3;"></div>
<svg style="left:1087px;top:653px;" width="26" height="36" viewBox="0 0 26 36"><circle cx="12.7" cy="12.5" r="12.5" fill="#f4913f"/><path d="M5,19 L20.4,19 L18,25 L7.5,25 Z" fill="#f4913f"/><rect x="5.7" y="28" width="14.6" height="2.6" fill="#555"/><rect x="7" y="32.5" width="12" height="2.6" fill="#555" rx="1"/></svg>
<svg style="left:3491px;top:136.5px;" width="29" height="22" viewBox="0 0 29 22"><polygon points="0,10.8 5,6.1 11.6,12.8 24.3,0 28.5,4.5 11.4,21.8" fill="#4dae4f"/></svg>
<svg style="left:3537.6px;top:84.2px;" width="24" height="28" viewBox="0 0 24 28"><g fill="#5a5a56"><circle cx="12" cy="5.5" r="4.8"/><ellipse cx="12" cy="19.5" rx="6.5" ry="8"/></g><g stroke="#5a5a56" stroke-width="2.2" fill="none"><path d="M1,3 L6,9.5 L18,9.5 L23,3"/><path d="M0,12.5 L24,12.5"/><path d="M1,27.7 L1,20 L5.5,16 M23,27.7 L23,20 L18.5,16"/></g></svg>
<div class="t" style="left:3566.80px;top:123.30px;font-size:28px;line-height:39px;color:#000;letter-spacing:1.000px;transform-origin:0 0;transform:rotate(90deg)">Ant</div>
<svg style="left:3536.2px;top:217.7px;" width="27" height="29.2" viewBox="0 0 27 29.2"><g fill="#5a5a56"><ellipse cx="13.5" cy="4.6" rx="13.5" ry="4.6"/><path d="M0,9.2 Q13.5,15 27,9.2 L27,13.5 Q13.5,19.5 0,13.5 Z"/><path d="M0,16.3 Q13.5,22 27,16.3 L27,20.5 Q13.5,26.5 0,20.5 Z"/><path d="M0,23.2 Q13.5,29 27,23.2 L27,25 Q13.5,31 0,25 Z"/></g></svg>
<div class="t" style="left:3566.80px;top:256.90px;font-size:28px;line-height:39px;color:#000;letter-spacing:0.943px;transform-origin:0 0;transform:rotate(90deg)">Database</div>
<svg style="left:3534.6px;top:437.5px;" width="30.4" height="21.1" viewBox="0 0 30.4 21.1"><g transform="scale(0.811,0.868)"><path d="M0,24.3 L4.7,0 L11.2,0 L10.9,2.2 Q14,0 18.2,0 Q21.5,0 24.4,4 Q26.5,0.5 30.5,0 L33,0 Q37.5,0.5 36.9,4 L34.4,24.3 L26,24.3 L29.2,7.5 Q29.5,5.5 27.4,5.6 Q25,5.7 24.1,7.5 L20.9,24.3 L14.2,24.3 L16.6,7.5 Q16.8,5.3 14.4,5.4 Q11,5.6 9.8,7.6 L6.7,24.3 Z" fill="#5a5a56"/></g></svg>
<div class="t" style="left:3566.80px;top:472.00px;font-size:28px;line-height:39px;color:#000;letter-spacing:1.000px;transform-origin:0 0;transform:rotate(90deg)">Maven</div>
<div class="t" style="left:57.3px;top:1275.61px;font-size:30px;line-height:42px;color:#000;font-family:'Liberation Sans',sans-serif;letter-spacing:-0.5px;">Run:</div>
<svg style="left:165px;top:1283px;" width="31" height="24" viewBox="0 0 31 24"><polygon points="12.5,0.4 0,12 12.5,23.6" fill="#f4a05c"/><polygon points="18,0.4 30,12 18,23.6" fill="#9fd09f"/></svg>
<div class="t" style="left:207.6px;top:1275.61px;font-size:30px;line-height:42px;color:#000;font-family:'Liberation Sans',sans-serif;letter-spacing:0.562px;">HelloWorldTest</div>
<svg style="left:435px;top:1288px;" width="19" height="19" viewBox="0 0 19 19"><line x1="1" y1="1" x2="18" y2="18" stroke="#a0a0a0" stroke-width="2.5"/><line x1="18" y1="1" x2="1" y2="18" stroke="#a0a0a0" stroke-width="2.5"/></svg>
<svg style="left:3406px;top:1278.8px;" width="32.4" height="32.4" viewBox="0 0 32.4 32.4"><g fill="#6c6e6e"><circle cx="16.2" cy="16.2" r="11.7"/><path d="M12.6,0.2 L19.8,0.2 L20.6,8 L11.8,8 Z" transform="rotate(0 16.2 16.2)"/><path d="M12.6,0.2 L19.8,0.2 L20.6,8 L11.8,8 Z" transform="rotate(60 16.2 16.2)"/><path d="M12.6,0.2 L19.8,0.2 L20.6,8 L11.8,8 Z" transform="rotate(120 16.2 16.2)"/><path d="M12.6,0.2 L19.8,0.2 L20.6,8 L11.8,8 Z" transform="rotate(180 16.2 16.2)"/><path d="M12.6,0.2 L19.8,0.2 L20.6,8 L11.8,8 Z" transform="rotate(240 16.2 16.2)"/><path d="M12.6,0.2 L19.8,0.2 L20.6,8 L11.8,8 Z" transform="rotate(300 16.2 16.2)"/></g><circle cx="16.2" cy="16.2" r="6" fill="#f1f1f1"/></svg>
<div class="a" style="left:3475px;top:1292.1px;width:30px;height:5.3px;background:#6c6e6e;"></div>
<svg style="left:69px;top:1352px;" width="26" height="30" viewBox="0 0 26 30"><polygon points="0,0 26,15 0,30" fill="#4dae4f"/></svg>
<svg style="left:62px;top:1417px;" width="38" height="38" viewBox="0 0 38 38"><circle cx="22.8" cy="15.4" r="15" fill="#c2c2c2"/><rect x="20.5" y="5.5" width="4.6" height="11" fill="#f0f0f0"/><rect x="18" y="18.5" width="7.1" height="3.6" fill="#f0f0f0"/><polygon points="0,10.5 20,23 0,35.3" fill="#c2c2c2" stroke="#f0f0f0" stroke-width="2.2"/></svg>
<svg style="left:62px;top:1483px;" width="38" height="40" viewBox="0 0 38 40"><path d="M33.8,14.1 A16.5,16.5 0 0 0 4.0,11.5" fill="none" stroke="#5a5a56" stroke-width="4"/><path d="M2.8,25.3 A16.5,16.5 0 0 0 32.6,27.9" fill="none" stroke="#5a5a56" stroke-width="4"/><polygon points="2.6,1.4 2.6,12 12.5,12" fill="#5a5a56"/><polygon points="33.6,37.4 33.6,27 23.6,27" fill="#5a5a56"/><rect x="3.5" y="15.3" width="8" height="7.8" fill="#f0f0f0" stroke="#5a5a56" stroke-width="3"/><rect x="23.4" y="15.3" width="8" height="7.8" fill="#f0f0f0" stroke="#5a5a56" stroke-width="3"/></svg>
<div class="a" style="left:56px;top:1545px;width:46px;height:2px;background:#cdcdcd;"></div>
<div class="a" style="left:67px;top:1578px;width:26px;height:26px;background:#bdbdbd;"></div>
<svg style="left:62px;top:1643.9px;" width="36" height="30" viewBox="0 0 36 30"><path d="M0,5.1 L10.8,5.1 L13.3,0 L22.7,0 L25.2,5.1 L35.8,5.1 L35.8,29.8 L0,29.8 Z" fill="#a8abae"/><circle cx="18" cy="17.5" r="9.3" fill="#f0f0f0"/><circle cx="18" cy="17.5" r="5.5" fill="#a8abae"/></svg>
<svg style="left:64px;top:1709px;" width="38" height="38" viewBox="0 0 38 38"><g stroke="#b4b6b8" stroke-width="3.2"><line x1="8.8" y1="0.7" x2="23.2" y2="11"/><line x1="23.2" y1="0.7" x2="8.8" y2="11"/></g><g fill="#b4b6b8"><rect x="6" y="9" width="20" height="26" rx="6"/><rect x="0.6" y="11" width="30" height="4"/><rect x="0.6" y="19.5" width="12" height="4"/><rect x="0.6" y="27" width="12" height="4"/></g><polygon points="20,22 38,22 38,38 20,38" fill="#f0f0f0"/><line x1="21" y1="36" x2="33" y2="24" stroke="#a8abae" stroke-width="4.2"/><polygon points="23.5,20.5 36,20.5 36,33" fill="#a8abae"/></svg>
<svg style="left:73px;top:1817px;" width="18" height="12" viewBox="0 0 18 12"><polyline points="1,1 6,6 1,11" fill="none" stroke="#555" stroke-width="2"/><polyline points="10,1 15,6 10,11" fill="none" stroke="#555" stroke-width="2"/></svg>
<div class="a" style="left:130px;top:1337px;width:56px;height:56px;background:#c9c9c9;border-radius:5px;"></div>
<svg style="left:142px;top:1352px;" width="32" height="26" viewBox="0 0 32 26"><polyline points="2,12 11,22 29,3" fill="none" stroke="#5a5a56" stroke-width="5.5"/></svg>
<div class="a" style="left:198px;top:1337px;width:56px;height:56px;background:#c9c9c9;border-radius:5px;"></div>
<svg style="left:209px;top:1349px;" width="33" height="33" viewBox="0 0 33 33"><circle cx="16.5" cy="16.5" r="13.5" fill="none" stroke="#5a5a56" stroke-width="4.5"/><line x1="8" y1="25" x2="25" y2="8" stroke="#5a5a56" stroke-width="4.5"/></svg>
<div class="a" style="left:268px;top:1341px;width:2px;height:45px;background:#cdcdcd;"></div>
<svg style="left:297px;top:1349px;" width="35" height="33" viewBox="0 0 35 33"><rect x="8.5" y="0" width="4.5" height="24" fill="#5a5a56"/><polygon points="0,21 21.5,21 10.75,31" fill="#5a5a56"/><text x="26" y="14" font-family="Liberation Sans, sans-serif" font-weight="bold" font-size="17" text-anchor="middle" fill="#5a5a56">a</text><text x="26" y="31.5" font-family="Liberation Sans, sans-serif" font-weight="bold" font-size="17" text-anchor="middle" fill="#5a5a56">z</text></svg>
<svg style="left:365px;top:1349px;" width="36" height="32" viewBox="0 0 36 32"><rect x="8.5" y="0" width="4.5" height="24" fill="#5a5a56"/><polygon points="0,21 21.5,21 10.75,31" fill="#5a5a56"/><rect x="17.5" y="0.5" width="17.5" height="4.5" fill="#5a5a56"/><rect x="22.5" y="10" width="12.5" height="4.5" fill="#5a5a56"/><rect x="27.5" y="20.5" width="7.5" height="4.5" fill="#5a5a56"/></svg>
<div class="a" style="left:424px;top:1341px;width:2px;height:45px;background:#cdcdcd;"></div>
<svg style="left:455px;top:1346px;" width="30" height="35" viewBox="0 0 30 35"><rect x="0" y="0" width="30" height="4" fill="#5a5a56"/><polygon points="7,12 23,12 15,5" fill="#5a5a56"/><polygon points="7,23 23,23 15,30" fill="#5a5a56"/><rect x="0" y="31" width="30" height="4" fill="#5a5a56"/></svg>
<svg style="left:523px;top:1349px;" width="30" height="30" viewBox="0 0 30 30"><polygon points="7,0 23,0 15,8" fill="#5a5a56"/><rect x="0" y="13" width="30" height="4" fill="#5a5a56"/><polygon points="7,30 23,30 15,22" fill="#5a5a56"/></svg>
<div class="a" style="left:580px;top:1341px;width:2px;height:45px;background:#cdcdcd;"></div>
<svg style="left:613px;top:1349px;" width="26" height="32" viewBox="0 0 26 32"><line x1="13" y1="3" x2="13" y2="32" stroke="#b3b3b3" stroke-width="4"/><polyline points="2,13 13,2 24,13" fill="none" stroke="#b3b3b3" stroke-width="4"/></svg>
<svg style="left:682px;top:1349px;" width="26" height="32" viewBox="0 0 26 32"><line x1="13" y1="0" x2="13" y2="29" stroke="#b3b3b3" stroke-width="4"/><polyline points="2,19 13,30 24,19" fill="none" stroke="#b3b3b3" stroke-width="4"/></svg>
<svg style="left:744px;top:1347px;" width="42" height="38" viewBox="0 0 42 38"><circle cx="17" cy="17" r="14" fill="none" stroke="#5a5a56" stroke-width="4"/><polyline points="17,8 17,18 24,24" fill="none" stroke="#5a5a56" stroke-width="3.5"/><polygon points="28,31 42,31 35,38" fill="#1a1a1a"/></svg>
<svg style="left:815px;top:1349px;" width="30" height="32" viewBox="0 0 30 32"><g fill="#5a5a56"><rect x="0" y="6" width="4.7" height="24.7"/><rect x="0" y="25.8" width="25" height="4.9"/><polygon points="13.6,6.3 13.6,21 25,21"/></g><line x1="27.5" y1="3" x2="17" y2="13.5" stroke="#5a5a56" stroke-width="4.5"/></svg>
<svg style="left:883px;top:1349px;" width="30" height="32" viewBox="0 0 30 32"><g fill="#5a5a56"><rect x="0" y="6" width="4.8" height="24.7"/><rect x="0" y="25.8" width="24.7" height="4.9"/><polygon points="15.8,0.9 29.6,0.9 29.6,15.2"/></g><line x1="11.7" y1="19.3" x2="23" y2="8" stroke="#5a5a56" stroke-width="4.5"/></svg>
<svg style="left:950px;top:1347px;" width="32.4" height="32.4" viewBox="0 0 32.4 32.4"><g fill="#5a5a56"><circle cx="16.2" cy="16.2" r="11.7"/><path d="M12.6,0.2 L19.8,0.2 L20.6,8 L11.8,8 Z" transform="rotate(0 16.2 16.2)"/><path d="M12.6,0.2 L19.8,0.2 L20.6,8 L11.8,8 Z" transform="rotate(60 16.2 16.2)"/><path d="M12.6,0.2 L19.8,0.2 L20.6,8 L11.8,8 Z" transform="rotate(120 16.2 16.2)"/><path d="M12.6,0.2 L19.8,0.2 L20.6,8 L11.8,8 Z" transform="rotate(180 16.2 16.2)"/><path d="M12.6,0.2 L19.8,0.2 L20.6,8 L11.8,8 Z" transform="rotate(240 16.2 16.2)"/><path d="M12.6,0.2 L19.8,0.2 L20.6,8 L11.8,8 Z" transform="rotate(300 16.2 16.2)"/></g><circle cx="16.2" cy="16.2" r="6" fill="#ededed"/></svg>
<svg style="left:974px;top:1371px;" width="14" height="8" viewBox="0 0 14 8"><polygon points="0,0 14,0 7,8" fill="#1a1a1a"/></svg>
<svg style="left:1452.7px;top:1347px;" width="31.5" height="24" viewBox="0 0 31.5 24"><polygon points="0,12.5 4.5,8.5 11,15 27,0 31.5,4.5 11,24" fill="#4dae4f"/></svg>
<div class="t" style="left:1496.4px;top:1337.61px;font-size:30px;line-height:42px;color:#000;font-family:'Liberation Sans',sans-serif;letter-spacing:1.229px;">Tests passed: 1</div>
<div class="t" style="left:1731.2px;top:1337.61px;font-size:30px;line-height:42px;color:#6e6e6e;font-family:'Liberation Sans',sans-serif;letter-spacing:1.164px;">of 1 test – 1ms</div>
<svg style="left:130.5px;top:1416.6px;" width="22" height="19" viewBox="0 0 22 19"><polygon points="0,0 22,0 11,19" fill="#9a9da1"/></svg>
<svg style="left:181px;top:1417px;" width="31" height="24" viewBox="0 0 31 24"><polygon points="0,12.5 4.5,8.5 11,15 26.5,0 31,4.5 11,24" fill="#4dae4f"/></svg>
<div class="t" style="left:223.3px;top:1407.61px;font-size:30px;line-height:42px;color:#000;font-family:'Liberation Sans',sans-serif;letter-spacing:1.854px;">HelloWorldTest</div>
<div class="t" style="left:458px;top:1407.61px;font-size:30px;line-height:42px;color:#6e6e6e;font-family:'Liberation Sans',sans-serif;letter-spacing:1.635px;">(tech.pdai.junit4)</div>
<svg style="left:227px;top:1466.7px;" width="31" height="24" viewBox="0 0 31 24"><polygon points="0,12.5 4.5,8.5 11,15 26.5,0 31,4.5 11,24" fill="#5db75f"/></svg>
<div class="t" style="left:271px;top:1457.11px;font-size:30px;line-height:42px;color:#000;font-family:'Liberation Sans',sans-serif;letter-spacing:2.175px;">firstTest</div>
<div class="t" style="left:1374.8px;top:1408.80px;font-size:28px;line-height:39px;color:#000;font-family:'Liberation Sans',sans-serif;letter-spacing:2.1px;">1ms</div>
<div class="t" style="left:1374.8px;top:1458.80px;font-size:28px;line-height:39px;color:#6e6e6e;font-family:'Liberation Sans',sans-serif;letter-spacing:2.1px;">1ms</div>
<div class="t" style="left:1474px;top:1412.14px;font-size:33.25px;line-height:47px;color:#505050;font-family:'Liberation Mono',monospace;font-weight:bold;">/Library/Java/JavaVirtualMachines/jdk1.8.0_181.jdk/Contents/Home/bin/java ...</div>
<div class="t" style="left:1474px;top:1522.64px;font-size:33.25px;line-height:47px;color:#000080;font-family:'Liberation Mono',monospace;-webkit-text-stroke:0.45px;">Process finished with exit code 0</div>
<svg style="left:3474px;top:1425px;" width="26" height="32" viewBox="0 0 26 32"><line x1="13" y1="3" x2="13" y2="32" stroke="#b3b3b3" stroke-width="4"/><polyline points="2,13 13,2 24,13" fill="none" stroke="#b3b3b3" stroke-width="4"/></svg>
<svg style="left:3474px;top:1492px;" width="26" height="32" viewBox="0 0 26 32"><line x1="13" y1="0" x2="13" y2="29" stroke="#b3b3b3" stroke-width="4"/><polyline points="2,19 13,30 24,19" fill="none" stroke="#b3b3b3" stroke-width="4"/></svg>
<svg style="left:3471px;top:1560px;" width="34" height="36" viewBox="0 0 34 36"><rect x="0" y="0" width="30" height="4" fill="#5a5a56"/><rect x="0" y="12" width="18" height="4" fill="#5a5a56"/><rect x="0" y="25" width="6" height="4" fill="#5a5a56"/><path d="M12,14 L24,14 A7,7 0 0 1 24,28 L16,28" fill="none" stroke="#5a5a56" stroke-width="4"/><polygon points="10,28 18,21 18,35" fill="#5a5a56"/></svg>
<svg style="left:3471px;top:1625px;" width="34" height="34" viewBox="0 0 34 34"><rect x="0" y="5" width="8" height="4" fill="#5a5a56"/><rect x="0" y="15" width="8" height="4" fill="#5a5a56"/><rect x="0" y="28" width="34" height="4" fill="#5a5a56"/><line x1="21" y1="0" x2="21" y2="22" stroke="#5a5a56" stroke-width="4"/><polyline points="12,13 21,22 30,13" fill="none" stroke="#5a5a56" stroke-width="4"/></svg>
<svg style="left:3469px;top:1695px;" width="36" height="36" viewBox="0 0 36 36"><rect x="8" y="0" width="20" height="7" fill="#5a5a56"/><rect x="0" y="10" width="36" height="15" rx="3" fill="#5a5a56"/><rect x="9" y="20" width="18" height="15" fill="#f0f0f0" stroke="#5a5a56" stroke-width="4"/></svg>
<svg style="left:3473px;top:1761px;" width="28" height="34" viewBox="0 0 28 34"><rect x="0" y="4" width="28" height="4" fill="#5a5a56"/><rect x="9" y="0" width="10" height="4" fill="#5a5a56"/><path d="M3,10 L25,10 L24,31 Q24,34 21,34 L7,34 Q4,34 4,31 Z" fill="#5a5a56"/></svg>
<svg style="left:79px;top:1866px;" width="24" height="20" viewBox="0 0 24 20"><g fill="#5e5e5e"><rect x="0" y="0" width="4.5" height="4.5"/><rect x="7.5" y="0" width="16" height="4.5"/><rect x="0" y="7.7" width="4.5" height="4.5"/><rect x="7.5" y="7.7" width="16" height="4.5"/><rect x="0" y="15.3" width="4.5" height="4.5"/><rect x="7.5" y="15.3" width="16" height="4.5"/></g></svg>
<div class="t" style="left:113.6px;top:1857.81px;font-size:30px;line-height:42px;color:#000;font-family:'Liberation Sans',sans-serif;letter-spacing:-0.667px;"><u>6</u>: TODO</div>
<svg style="left:284.8px;top:1865.3px;" width="19" height="23" viewBox="0 0 19 23"><polygon points="0,0 18.6,11.2 0,22.5" fill="#5e5e5e"/></svg>
<div class="t" style="left:319.3px;top:1857.81px;font-size:30px;line-height:42px;color:#000;font-family:'Liberation Sans',sans-serif;letter-spacing:-0.5px;"><u>4</u>: Run</div>
<svg style="left:462.8px;top:1864.8px;" width="31" height="24" viewBox="0 0 31 24"><rect x="12.5" y="0" width="8" height="24" fill="#f4a05c" stroke="#4a4a4a" stroke-width="2"/><line x1="0" y1="6" x2="11" y2="6" stroke="#4a4a4a" stroke-width="2.5"/><polygon points="8,2 12.5,6 8,10" fill="#4a4a4a"/><line x1="21" y1="15" x2="28" y2="15" stroke="#4a4a4a" stroke-width="2.5"/><polygon points="26,11 31,15 26,19" fill="#4a4a4a"/></svg>
<div class="t" style="left:501.2px;top:1857.81px;font-size:30px;line-height:42px;color:#000;font-family:'Liberation Sans',sans-serif;letter-spacing:-0.38px;">Sequence Diagram</div>
<svg style="left:809.3px;top:1860.9px;" width="34" height="32" viewBox="0 0 34 32"><ellipse cx="16.6" cy="15.8" rx="14.6" ry="13.8" fill="none" stroke="#e0443e" stroke-width="4"/><path d="M3,15.8 L9,15.8 L11,12.5 L13,19 L15,13.5 L17,18 L19,14 L21,17 L23,15.8 L30,15.8" fill="none" stroke="#e0443e" stroke-width="2.2"/><line x1="3" y1="15.8" x2="30" y2="15.8" stroke="#f4a05c" stroke-width="1.4"/></svg>
<div class="t" style="left:849.2px;top:1857.81px;font-size:30px;line-height:42px;color:#000;font-family:'Liberation Sans',sans-serif;letter-spacing:-0.1px;">SonarLint</div>
<svg style="left:1030.4px;top:1864px;" width="27" height="23.5" viewBox="0 0 27 23.5"><rect x="0" y="0" width="26.7" height="23.3" fill="#5e5e5e"/><polyline points="4.5,5 10,9.5 4.5,14" fill="none" stroke="#fff" stroke-width="2.2"/><line x1="11" y1="17.5" x2="19" y2="17.5" stroke="#fff" stroke-width="2.2"/></svg>
<div class="t" style="left:1068.6px;top:1857.81px;font-size:30px;line-height:42px;color:#000;font-family:'Liberation Sans',sans-serif;letter-spacing:0.114px;">Terminal</div>
<svg style="left:1234.2px;top:1862.4px;" width="31" height="28" viewBox="0 0 31 28"><polygon points="0,9.5 9,1 15.5,0 17.5,2.5 11.5,6.5 8.5,14" fill="#5e5e5e"/><polygon points="8.5,12 13,7.5 31,24 26.5,28.5" fill="#5e5e5e"/></svg>
<div class="t" style="left:1273.2px;top:1857.81px;font-size:30px;line-height:42px;color:#000;font-family:'Liberation Sans',sans-serif;letter-spacing:0.15px;">Build</div>
<svg style="left:1391.6px;top:1866px;" width="28" height="20" viewBox="0 0 28 20"><g fill="#5e5e5e"><rect x="0" y="0" width="28" height="4.5"/><rect x="0" y="7.5" width="14" height="4.5"/><rect x="0" y="15.2" width="22" height="4.5"/></g></svg>
<div class="t" style="left:1429.4px;top:1857.81px;font-size:30px;line-height:42px;color:#000;font-family:'Liberation Sans',sans-serif;letter-spacing:-0.18px;"><u>0</u>: Messages</div>
<svg style="left:3100px;top:1861px;" width="32" height="32" viewBox="0 0 32 32"><path d="M30,30 L15.5,30 A14,14 0 1 1 30,15.5 Z" fill="none" stroke="#5e5e5e" stroke-width="3"/></svg>
<div class="t" style="left:3139.7px;top:1857.81px;font-size:30px;line-height:42px;color:#000;font-family:'Liberation Sans',sans-serif;letter-spacing:-0.3px;">Event Log</div>
<svg style="left:3324.4px;top:1857px;" width="40" height="37" viewBox="0 0 40 37"><rect x="1" y="1" width="37.5" height="35" fill="#e8e8e8" stroke="#9a9a9a" stroke-width="2"/><rect x="4.5" y="5" width="30.5" height="4" fill="#8e9cc8"/><g stroke="#d5d5d5" stroke-width="1"><line x1="11" y1="11" x2="11" y2="33"/><line x1="20" y1="11" x2="20" y2="33"/><line x1="29" y1="11" x2="29" y2="33"/></g><rect x="4.5" y="15" width="15" height="3" fill="#4dae4f"/><rect x="19.5" y="15" width="15" height="3" fill="#f4a05c"/><rect x="20" y="14" width="5" height="3" fill="#e05555"/><rect x="4.5" y="24" width="10" height="3" fill="#c8c8c8"/><rect x="14.5" y="24" width="6" height="3" fill="#f4a05c"/><rect x="20.5" y="24" width="14" height="3" fill="#4dae4f"/></svg>
<div class="t" style="left:3372.9px;top:1857.81px;font-size:30px;line-height:42px;color:#000;font-family:'Liberation Sans',sans-serif;letter-spacing:-0.886px;">VisualGC</div>
<svg style="left:6px;top:1917px;" width="32" height="32" viewBox="0 0 32 32"><rect x="7.5" y="2.4" width="23" height="22.2" fill="none" stroke="#4f4f4b" stroke-width="2.8"/><polyline points="2.4,5.8 2.4,29.3 25.8,29.3" fill="none" stroke="#4f4f4b" stroke-width="2.8"/></svg>
<div class="t" style="left:68.4px;top:1911.11px;font-size:30px;line-height:42px;color:#000;font-family:'Liberation Sans',sans-serif;letter-spacing:-0.187px;">Tests passed: 1 (13 minutes ago)</div>
<div class="t" style="left:3077px;top:1911.11px;font-size:30px;line-height:42px;color:#000;font-family:'Liberation Sans',sans-serif;letter-spacing:-0.967px;">11:4</div>
<div class="t" style="left:3153.8px;top:1911.11px;font-size:30px;line-height:42px;color:#000;font-family:'Liberation Sans',sans-serif;letter-spacing:-3.6px;">LF</div>
<div class="t" style="left:3209.2px;top:1911.11px;font-size:30px;line-height:42px;color:#000;font-family:'Liberation Sans',sans-serif;letter-spacing:0.45px;">UTF-8</div>
<div class="t" style="left:3320.4px;top:1911.11px;font-size:30px;line-height:42px;color:#000;font-family:'Liberation Sans',sans-serif;letter-spacing:-0.171px;">4 spaces</div>
<svg style="left:3462.2px;top:1918.5px;" width="28" height="28" viewBox="0 0 28 28"><path d="M2,13 L2,8 A6.3,6.3 0 0 1 14.6,8 L14.6,13" fill="none" stroke="#5a5a56" stroke-width="3.2"/><rect x="7.5" y="13.5" width="20" height="14" fill="#5a5a56"/></svg>
<svg style="left:3516px;top:1900px;" width="40" height="50" viewBox="0 0 40 50"><g fill="#5a5a56"><path d="M9.9,25.4 L9.9,19 Q9.9,15.1 14,15.1 L25.8,15.1 Q29.8,15.1 29.8,19 L29.8,25.4 Z"/><rect x="5" y="25" width="30" height="2.8"/><path d="M6.6,48 Q8,43 14,42.6 Q20,45 26,42.6 Q32,43 33.4,48 Z"/><circle cx="16.7" cy="32.2" r="1.8"/><circle cx="23.2" cy="32.2" r="1.8"/></g><path d="M10.9,27.8 L10.9,35 Q10.9,43 19.9,43 Q28.9,43 28.9,35 L28.9,27.8" fill="none" stroke="#5a5a56" stroke-width="1.8"/><path d="M10.5,31.5 L8.8,31.5 L8.8,35 L10.5,35 M29.3,31.5 L31,31.5 L31,35 L29.3,35" fill="none" stroke="#5a5a56" stroke-width="1.6"/><path d="M16.1,37.3 Q19.9,40.5 23.8,37.3" fill="none" stroke="#5a5a56" stroke-width="1.6"/></svg>
<svg style="left:3560px;top:1936px;" width="16" height="20" viewBox="0 0 16 20"><path d="M16,2 Q15,16 7,20 L16,20 Z" fill="#2b2b2b"/></svg>
<div class="a" style="left:0px;top:1954px;width:2px;height:2px;background:#333;"></div>
</body></html>
